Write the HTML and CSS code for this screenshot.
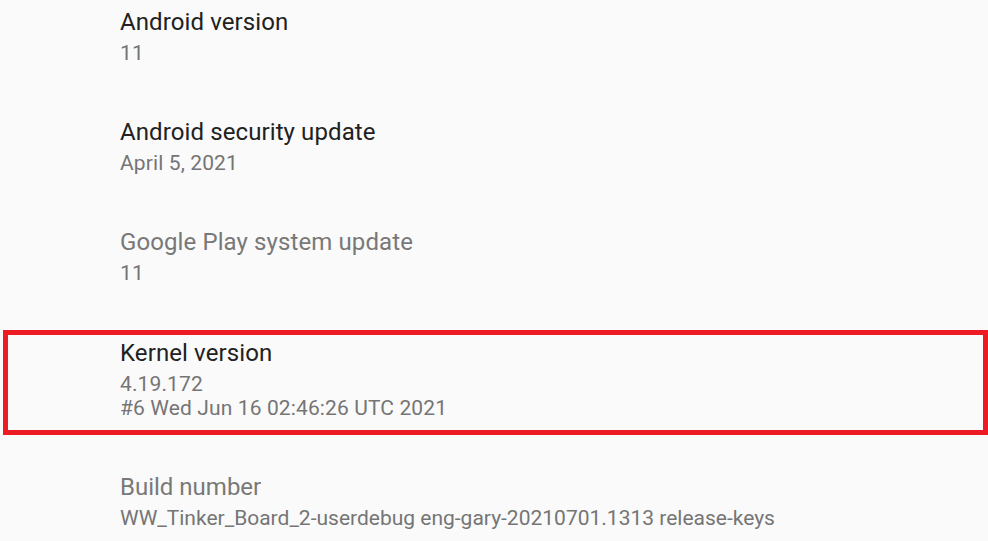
FILE: index.html
```html
<!DOCTYPE html>
<html>
<head>
<meta name="viewport" content="width=device-width, initial-scale=1.0">
<title>About tablet</title>
<link rel="stylesheet" href="styles.css">
</head>
<body>

<div class="prefs">
    <div class="pref">
        <div class="title">Android version</div>
        <div class="summary">11</div>
    </div>
    <div class="pref">
        <div class="title">Android security update</div>
        <div class="summary">April 5, 2021</div>
    </div>
    <div class="pref disabled">
        <div class="title">Google Play system update</div>
        <div class="summary">11</div>
    </div>
    <div class="pref marked">
        <div class="title">Kernel version</div>
        <div class="summary">4.19.172</div>
        <div class="summary">#6 Wed Jun 16 02:46:26 UTC 2021</div>
    </div>
    <div class="pref disabled tight">
        <div class="title">Build number</div>
        <div class="summary">WW_Tinker_Board_2-userdebug eng-gary-20210701.1313 release-keys</div>
    </div>
</div>

</body>
</html>
```

FILE: styles.css
```css
body {
    margin: 0;
    background-color: #fafafa;
    font-family: Roboto, "Noto Sans", sans-serif;
    overflow: hidden;
}

.prefs {
    margin-top: -1px;
}

.pref {
    height: 110px;
    box-sizing: border-box;
    padding: 5px 0 0 120px;
}

.title {
    font-size: 24px;
    line-height: 37px;
    letter-spacing: 0.1px;
    color: #212121;
}

.summary {
    font-size: 21px;
    line-height: 24px;
    letter-spacing: 0.12px;
    color: #757575;
}

.disabled .title {
    color: #787878;
}

.tight .title,
.tight .summary {
    letter-spacing: 0;
}

.marked {
    height: auto;
    margin: 1px 0 29px 3px;
    padding: 0 0 10px 112px;
    border: 5px solid #ed1c24;
}
```
